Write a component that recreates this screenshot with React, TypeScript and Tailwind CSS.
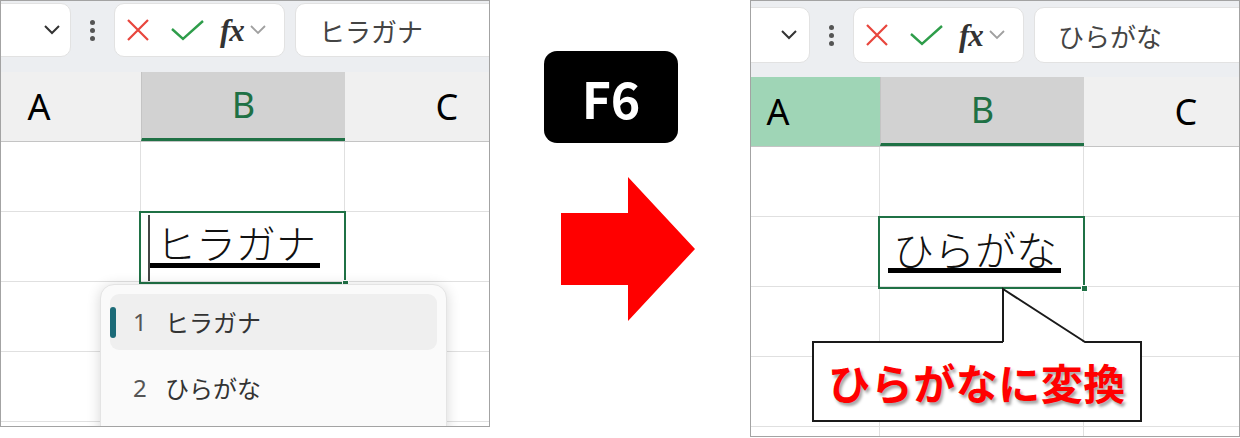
import React from 'react';

const GREEN = '#1f7145';

function NameChevron() {
  return (
    <svg width="18" height="12" viewBox="0 0 18 12">
      <path d="M2 2 L9 9 L16 2" stroke="#333" strokeWidth="2" fill="none" />
    </svg>
  );
}

function Dots() {
  return (
    <div className="flex flex-col gap-[3px] items-center">
      <span className="w-[5px] h-[5px] rounded-full bg-[#555]" />
      <span className="w-[5px] h-[5px] rounded-full bg-[#555]" />
      <span className="w-[5px] h-[5px] rounded-full bg-[#555]" />
    </div>
  );
}

function Toolbar({ big, text }: { big?: boolean; text: string }) {
  return (
    <div className={`flex bg-[#eceef1] ${big ? 'h-[76px] pt-[6px]' : 'h-[71px] pt-[2px]'}`}>
      <div className={`flex items-center gap-0 ${big ? 'h-[56px]' : 'h-[54px]'}`}>
        {/* name box */}
        <div
          className={`h-full bg-white rounded-[10px] border border-[#e2e2e2] flex items-center justify-end ${
            big ? 'ml-[-30px] w-[89px] pr-[11px]' : 'ml-[-20px] w-[90px] pr-[9px]'
          }`}
        >
          <NameChevron />
        </div>
        <div className="w-[43px] flex justify-center">
          <Dots />
        </div>
        {/* cancel / enter / fx */}
        <div className="h-full w-[171px] bg-white rounded-[10px] border border-[#e2e2e2] flex items-center pl-[11px]">
          <svg width="24" height="24" viewBox="0 0 24 24">
            <path d="M2 2 L22 22 M22 2 L2 22" stroke="#e8453c" strokeWidth="2.2" fill="none" />
          </svg>
          <svg width="34" height="24" viewBox="0 0 34 24" className="ml-[21px]">
            <path d="M1 11 L12 21 L32 3" stroke="#2e9d4a" strokeWidth="2.4" fill="none" />
          </svg>
          <span className="ml-[15px] font-['Liberation_Serif',serif] italic font-bold text-[31px] leading-none text-[#333] tracking-[-1px]">
            fx
          </span>
          <svg width="18" height="12" viewBox="0 0 18 12" className="ml-[5px]">
            <path d="M2 2 L9 9 L16 2" stroke="#a0a0a0" strokeWidth="1.8" fill="none" />
          </svg>
        </div>
        <div className="h-full w-[260px] ml-[10px] bg-white rounded-l-[10px] border border-[#e2e2e2] flex items-center pl-[23px] text-[26px] text-[#444]">
          {text}
        </div>
      </div>
    </div>
  );
}

function Header({ offset, aActive }: { offset: string; aActive?: boolean }) {
  return (
    <div className={`flex h-[70px] border-b border-[#c4c4c4] font-['Noto_Sans',sans-serif] text-[36px] ${offset}`}>
      <div className={`w-[204px] shrink-0 flex items-center justify-center text-black ${aActive ? 'bg-[#9fd5b6]' : 'bg-[#f0f0f0]'}`}>
        A
      </div>
      <div className="w-[204px] shrink-0 flex items-center justify-center bg-[#d2d2d2] border-l border-[#c4c4c4] border-b-[3px] border-b-[#1f7145] text-[#1f7145]">
        B
      </div>
      <div className="w-[204px] shrink-0 flex items-center justify-center bg-[#f0f0f0] text-black">C</div>
    </div>
  );
}

function Row({ offset, children }: { offset: string; children?: React.ReactNode }) {
  return (
    <div className={`flex h-[70px] ${offset}`}>
      <div className="w-[204px] shrink-0 border-r border-b border-[#e0e0e0]" />
      <div className="relative w-[204px] shrink-0 border-r border-b border-[#e0e0e0]">{children}</div>
      <div className="w-[204px] shrink-0 border-b border-[#e0e0e0]" />
    </div>
  );
}

function ActiveBorder() {
  return (
    <div className="absolute left-[-2px] top-[-1px] w-[207px] h-[73px] border-2 z-10" style={{ borderColor: GREEN }}>
      <div className="absolute right-[-5px] bottom-[-5px] w-[7px] h-[7px] border border-white" style={{ background: GREEN }} />
    </div>
  );
}

function LeftPanel() {
  return (
    <div className="relative w-[490px] h-[427px] shrink-0 border border-[#a3a3a3] overflow-hidden bg-white">
      <Toolbar text="ヒラガナ" />
      <Header offset="ml-[-64px]" />
      <Row offset="ml-[-64px]" />
      <Row offset="ml-[-64px]">
        <ActiveBorder />
        <div className="absolute left-[7px] top-[3px] w-[1.5px] h-[66px] bg-[#444]" />
        <div className="pl-[15px] pt-[10px] text-[40px] leading-[40px] font-light text-[#111]">ヒラガナ</div>
        <div className="ml-[9px] mt-[1px] w-[170px] h-[5px] bg-black" />
      </Row>
      <Row offset="ml-[-64px]" />
      <Row offset="ml-[-64px]" />

      {/* IME candidate list */}
      <div className="absolute left-[99px] top-[283px] w-[347px] h-[170px] bg-[#fafafa] rounded-t-[14px] border border-[#e4e4e4] shadow-[0_2px_14px_rgba(0,0,0,0.16)] z-20 pt-[9px] px-[9px]">
        <div className="relative h-[56px] rounded-[9px] bg-[#efefef] flex items-center pl-[23px] text-[24px]">
          <span className="absolute left-0 top-[13px] w-[6px] h-[31px] rounded-full bg-[#1c6b78]" />
          <span className="w-[32px] text-[#555] font-['Noto_Sans',sans-serif]">1</span>
          <span className="text-[#333]">ヒラガナ</span>
        </div>
        <div className="h-[56px] mt-[10px] flex items-center pl-[23px] text-[24px]">
          <span className="w-[32px] text-[#555] font-['Noto_Sans',sans-serif]">2</span>
          <span className="text-[#333]">ひらがな</span>
        </div>
      </div>
    </div>
  );
}

function RightPanel() {
  return (
    <div className="relative w-[490px] h-[437px] shrink-0 border border-[#a3a3a3] overflow-hidden bg-white">
      <Toolbar big text="ひらがな" />
      <Header offset="ml-[-75px]" aActive />
      <Row offset="ml-[-75px]" />
      <Row offset="ml-[-75px]">
        <ActiveBorder />
        <div className="pl-[13px] pt-[11px] text-[41px] leading-[41px] font-light text-[#111]">ひらがな</div>
        <div className="ml-[8px] mt-[-1px] w-[173px] h-[5px] bg-black" />
      </Row>
      <Row offset="ml-[-75px]" />
      <Row offset="ml-[-75px]" />
      <Row offset="ml-[-75px]" />

      {/* callout */}
      <div className="absolute left-[61px] top-[340px] w-[330px] h-[81px] border-2 border-[#1a1a1a] bg-white z-20 flex items-center justify-center">
        <span className="text-[42px] leading-none font-bold text-[#ff0000] tracking-[0.5px] [text-shadow:2px_3px_3px_rgba(0,0,0,0.35)]">
          ひらがなに変換
        </span>
      </div>
      <svg className="absolute left-[249px] top-[285px] z-30" width="90" height="60" viewBox="0 0 90 60">
        <polygon points="3,57 3,3 85,57" fill="#fff" />
        <polyline points="3,56 3,3 85,56" fill="none" stroke="#1a1a1a" strokeWidth="2" />
      </svg>
    </div>
  );
}

function Middle() {
  return (
    <div className="w-[260px] shrink-0 pt-[51px]">
      <div className="ml-[54px] w-[134px] h-[92px] bg-black rounded-[13px] flex items-center justify-center">
        <span className="text-white font-bold text-[50px] leading-none font-['Noto_Sans_CJK_JP',sans-serif]">F6</span>
      </div>
      <svg className="ml-[71px] mt-[34px]" width="134" height="144" viewBox="0 0 134 144">
        <polygon points="0,36 67,36 67,0 134,72 67,144 67,108 0,108" fill="#ff0000" />
      </svg>
    </div>
  );
}

export default function App() {
  return (
    <div className="w-[1240px] h-[438px] bg-white flex items-start font-['Noto_Sans_CJK_JP',sans-serif]">
      <LeftPanel />
      <Middle />
      <RightPanel />
    </div>
  );
}
